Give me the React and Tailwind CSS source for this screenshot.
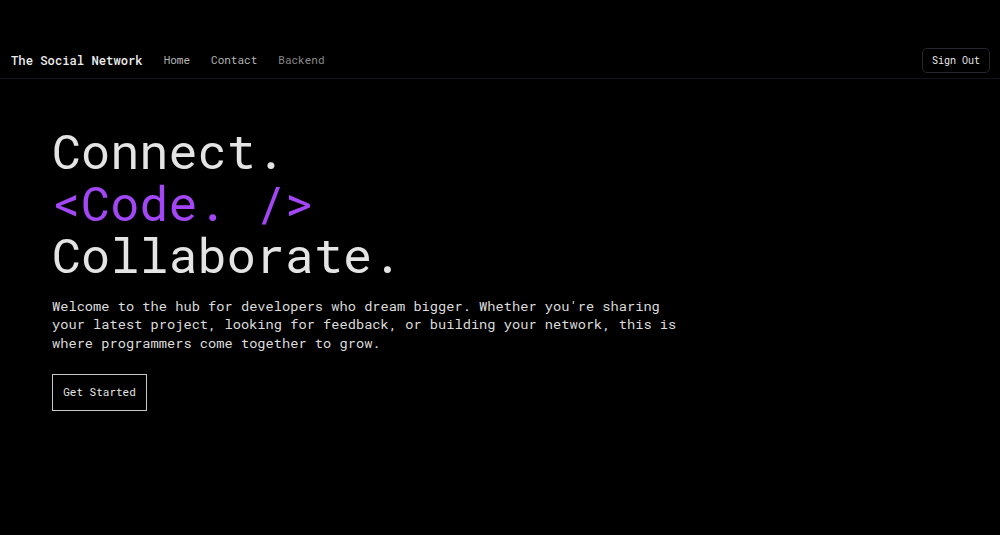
export default function App() {
  const mono = { fontFamily: '"Roboto Mono", "DejaVu Sans Mono", "Liberation Mono", monospace' };
  return (
    <div className="min-h-screen w-full bg-black pt-[42px] text-[#e4e4e4]" style={mono}>
      <header className="flex h-[37px] items-center justify-between border-b border-[#111318] pl-[11px] pr-[10px]">
        <nav className="flex items-center">
          <span className="text-[12.2px] font-medium text-[#ececec]">The Social Network</span>
          <a className="ml-[21px] text-[11px] text-[#b5b5b5]">Home</a>
          <a className="ml-[21px] text-[11px] text-[#b5b5b5]">Contact</a>
          <a className="ml-[21px] text-[11px] text-[#8a8a8a]">Backend</a>
        </nav>
        <button className="h-[25px] rounded-[5px] border border-[#26282d] px-[9px] text-[10px] text-[#e8e8e8]">
          Sign Out
        </button>
      </header>

      <main className="pl-[52px] pt-[45px]">
        <h1 className="text-[48.5px] leading-[52px]">
          <div>Connect.</div>
          <div className="text-[#a347f6]">&lt;Code. /&gt;</div>
          <div>Collaborate.</div>
        </h1>
        <p className="mt-[17px] max-w-[640px] text-[13.7px] leading-[18.3px] text-[#dcdcdc]">
          Welcome to the hub for developers who dream bigger. Whether you're sharing your latest project, looking for feedback, or building your network, this is where programmers come together to grow.
        </p>
        <button className="mt-[22px] h-[37px] w-[95px] border border-[#c8c8c8] text-[11px] text-[#e6e6e6]">
          Get Started
        </button>
      </main>
    </div>
  );
}
